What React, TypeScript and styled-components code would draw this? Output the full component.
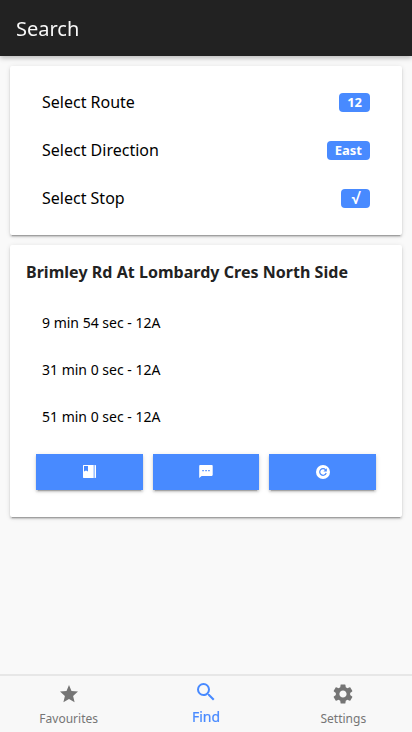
import React from "react";
import styled, { createGlobalStyle } from "styled-components";
import { MdSearch, MdSettings } from "react-icons/md";

const Global = createGlobalStyle`
  * { box-sizing: border-box; }
  body { margin: 0; background: #f9f9f9; font-family: "Noto Sans", sans-serif; color: #000; }
`;
const Page = styled.div`height: 732px; display: flex; flex-direction: column; overflow: hidden;`;
const Header = styled.header`
  height: 56px; flex: none; background: #222; color: #f8f8f8; padding: 2px 16px 0;
  display: flex; align-items: center; font-size: 20px; line-height: 24px;
  box-shadow: 0 2px 5px rgba(0,0,0,.26);
  span { will-change: transform; }
`;
const Main = styled.main`flex: 1; padding: 10px; display: flex; flex-direction: column; gap: 10px;`;
const Card = styled.section<{ $height: number }>`
  height: ${p => p.$height}px; background: #fff; border-radius: 2px;
  box-shadow: 0 2px 2px 0 rgba(0,0,0,.14), 0 3px 1px -2px rgba(0,0,0,.2), 0 1px 5px 0 rgba(0,0,0,.12);
`;
const Options = styled.div`padding: 12px 32px 0;`;
const Option = styled.div`height: 48px; display: flex; align-items: center; justify-content: space-between; font-size: 16px;`;
const Badge = styled.span<{ $check?: boolean }>`
  background: #488aff; color: #fff; border-radius: 4px; padding: 3px 8px; min-width: 10px;
  font-size: 13px; line-height: 13px; font-weight: bold; height: 19px; text-align: center;
  ${p => p.$check && `width: 29px; font-size: 15px; font-family: "Open Sans", sans-serif;`}
`;
const Title = styled.h2`margin: 0; padding: 16px 16px 0; font-size: 16px; line-height: 22px; color: #222; font-weight: bold; letter-spacing: .035px;`;
const Times = styled.div`padding: 16px 32px 0;`;
const Time = styled.div`height: 47px; display: flex; align-items: center; font-size: 14px;`;
const Actions = styled.div`display: grid; grid-template-columns: repeat(3, 1fr); gap: 10px; padding: 14px 26px 0;`;
const Action = styled.button`
  height: 36px; border: 0; border-radius: 0; background: #488aff; color: #fff; font-size: 16px; padding: 0;
  display: flex; align-items: center; justify-content: center;
  box-shadow: 0 2px 2px 0 rgba(0,0,0,.14), 0 3px 1px -2px rgba(0,0,0,.2), 0 1px 5px 0 rgba(0,0,0,.12);
`;
const ActionIcon = styled.svg`margin-top: -1px;`;
const Tabs = styled.nav`height: 58px; flex: none; display: grid; grid-template-columns: repeat(3, 1fr); background: #f8f8f8; border-top: 2px solid #e7e7e7;`;
const Tab = styled.div<{ $active?: boolean }>`
  display: flex; flex-direction: column; align-items: center; gap: 4px;
  padding-top: ${p => p.$active ? 4 : 6}px;
  color: ${p => p.$active ? "#488aff" : "#757575"}; font-size: 12px;
  svg { font-size: 24px; }
  span { line-height: 18px; ${p => p.$active && "margin-top: 1px; transform: translateY(-.5px) scale(1.1667); will-change: transform; -webkit-text-stroke: .2px #488aff;"} }
`;

export default function App() {
  return <><Global /><Page>
    <Header><span>Search</span></Header>
    <Main>
      <Card $height={169}><Options>
        <Option>Select Route<Badge>12</Badge></Option>
        <Option>Select Direction<Badge>East</Badge></Option>
        <Option>Select Stop<Badge $check>√</Badge></Option>
      </Options></Card>
      <Card $height={272}>
        <Title>Brimley Rd At Lombardy Cres North Side</Title>
        <Times><Time>9 min 54 sec - 12A</Time><Time>31 min 0 sec - 12A</Time><Time>51 min 0 sec - 12A</Time></Times>
        <Actions>
          <Action aria-label="Bookmark"><ActionIcon width="13" height="13" viewBox="0 0 13 13" fill="currentColor"><path fillRule="evenodd" d="M.5 0H10v13H.5L0 12.500V.500zM1 1v5.500l2-1 2 1V1z" /><path d="M10 0h.7v13H10zM11.500 0h1l.5.500v12l-.5.500h-1z" /></ActionIcon></Action>
          <Action aria-label="Message"><ActionIcon width="14" height="13" viewBox="0 0 14 13"><path d="M1.300 0h11.400c.7 0 1 .6 1 1.200v8.600c0 .7-.4 1.200-1 1.200H2.600L.2 13V1.200C.2.500.6 0 1.300 0z" fill="currentColor"/><path d="M3.300 5h1.500v1.300H3.300zM6.300 5h1.500v1.300H6.300zM9.200 5h1.500v1.300H9.200z" fill="#488aff"/></ActionIcon></Action>
          <Action aria-label="Refresh"><ActionIcon width="14" height="14" viewBox="0 0 14 14"><circle cx="7" cy="7" r="7" fill="currentColor"/><path d="M9.600 4.900A3.300 3.300 0 1 0 10.200 8" fill="none" stroke="#488aff" strokeWidth="1.200"/><path d="M10.800 3.200v3.400H7.400z" fill="#488aff"/></ActionIcon></Action>
        </Actions>
      </Card>
    </Main>
    <Tabs>
      <Tab><svg width="24" height="24" viewBox="0 1 24 24" fill="currentColor"><path d="M12 17.900l5.600 3.400-1.500-6.400 4.900-4.300-6.500-.6L12 4 9.500 10l-6.500.6 4.900 4.300-1.500 6.400z" /></svg><span>Favourites</span></Tab>
      <Tab $active><MdSearch /><span>Find</span></Tab>
      <Tab><MdSettings /><span>Settings</span></Tab>
    </Tabs>
  </Page></>;
}
